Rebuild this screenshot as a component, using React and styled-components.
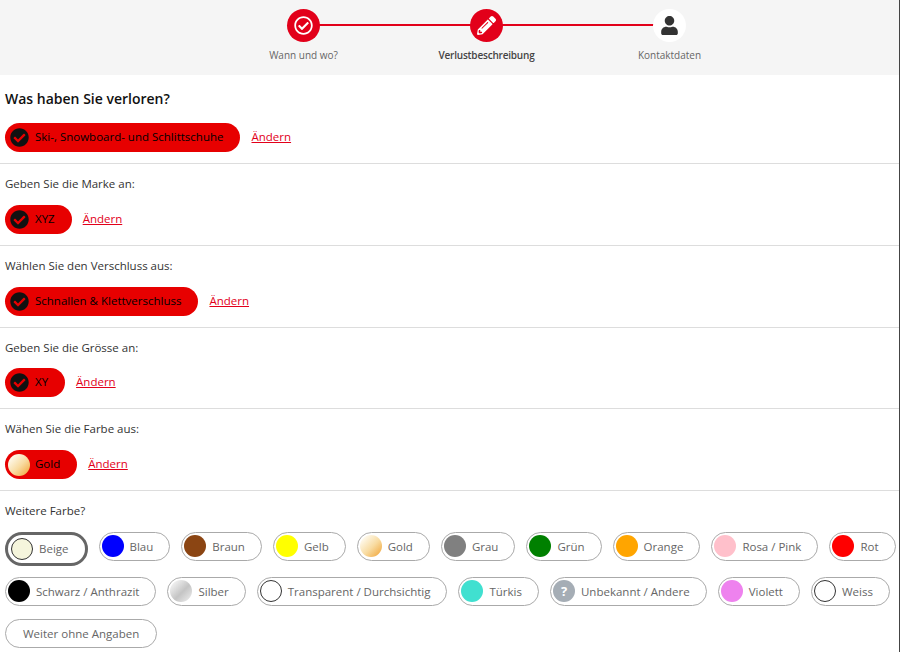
import styled, { createGlobalStyle } from 'styled-components';
import { FaCheckCircle, FaRegCheckCircle, FaPencilAlt, FaUser } from 'react-icons/fa';

const GlobalStyle = createGlobalStyle`
    html, body {
        margin: 0;
        padding: 0;
        background: #fff;
        font-family: "Open Sans", sans-serif;
        font-size: 11.5px;
        color: #333;
    }
`;

const Page = styled.main`
    position: relative;
    height: 652px;
    overflow: hidden;
    /* dark edge of the window on the right */
    &::after {
        content: '';
        position: absolute;
        top: 0;
        right: 0;
        bottom: 0;
        width: 1px;
        background: #444;
    }
`;

const Header = styled.header`
    height: 75px;
    background: #f5f5f5;
    display: flex;
    padding: 9px 0 0 212px;
    box-sizing: border-box;
`;

const Step = styled.div`
    position: relative;
    width: 183px;
    display: flex;
    flex-direction: column;
    align-items: center;
    /* connector to the next step */
    &:not(:last-child)::after {
        content: '';
        position: absolute;
        top: 15px;
        left: 50%;
        width: 100%;
        height: 2px;
        background: #e2001a;
    }
`;

const StepIcon = styled.div`
    position: relative;
    z-index: 1;
    width: 33px;
    height: 33px;
    border-radius: 50%;
    display: flex;
    align-items: center;
    justify-content: center;
    background: ${(p) => (p.$done ? '#e2001a' : '#fff')};
    color: ${(p) => (p.$done ? '#fff' : '#333')};
    font-size: 19px;
`;

const StepLabel = styled.div`
    margin-top: 6px;
    font-size: 10px;
    line-height: 14px;
    color: ${(p) => (p.$active ? '#444' : '#666')};
    font-weight: ${(p) => (p.$active ? 600 : 400)};
    letter-spacing: ${(p) => (p.$active ? '-0.2px' : '0')};
`;

const Title = styled.h2`
    margin: 0;
    padding: 14px 5px 0;
    font-size: 14px;
    line-height: 19px;
    font-weight: 600;
    color: #111;
`;

const Section = styled.section`
    padding: ${(p) => (p.$first ? '15px' : '12px')} 0 11px 5px;
    border-bottom: ${(p) => (p.$last ? 'none' : '1px solid #ddd')};
`;

const Question = styled.div`
    font-size: 11.5px;
    line-height: 15.75px;
    margin-bottom: 13px;
    color: #333;
`;

const Answer = styled.div`
    display: flex;
    align-items: center;
    gap: 11px;
`;

const SelectedPill = styled.div`
    height: 29px;
    box-sizing: border-box;
    padding: 0 17px 0 ${(p) => (p.$swatch ? '3px' : '5px')};
    display: inline-flex;
    align-items: center;
    gap: ${(p) => (p.$swatch ? '5px' : '6px')};
    border-radius: 15px;
    background: #e70000;
    font-size: 11.5px;
    color: #000;
    svg {
        font-size: 19px;
        color: #111;
    }
`;

const PillText = styled.span`
    margin-bottom: 2px;
`;

const ChangeLink = styled.a`
    margin-bottom: 2px;
    font-size: 11.5px;
    color: #e2001a;
    text-decoration: underline;
`;

const Chips = styled.div`
    display: flex;
    flex-wrap: wrap;
    gap: 11px;
    align-items: flex-start;
`;

const Chip = styled.button`
    height: ${(p) => (p.$focused ? '34px' : '29px')};
    box-sizing: border-box;
    padding: 0 16px 0 ${(p) => (p.$focused ? '3px' : '2px')};
    display: inline-flex;
    align-items: center;
    gap: 6px;
    border-radius: 18px;
    border: ${(p) => (p.$focused ? '3px solid #666' : '1px solid #aaa')};
    background: #fff;
    font-family: inherit;
    font-size: 11.5px;
    color: #666;
`;

const Swatch = styled.span`
    width: 22px;
    height: 22px;
    box-sizing: border-box;
    border-radius: 50%;
    background: ${(p) => p.$bg};
    border: ${(p) => (p.$outlined ? '1px solid #333' : 'none')};
    display: flex;
    align-items: center;
    justify-content: center;
    color: #fff;
    font-weight: 700;
    font-size: 13px;
`;

const SkipButton = styled(Chip)`
    padding: 0 17px;
    margin: 13px 0 0;
`;

const GOLD = 'linear-gradient(135deg, #fffdf5 10%, #f8dba0 55%, #f0a030 100%)';
const SILVER = 'linear-gradient(135deg, #f5f5f5 10%, #c4c4c4 55%, #f0f0f0 100%)';

const colours = [
    { name: 'Beige', bg: '#f5f5dc', outlined: true, focused: true },
    { name: 'Blau', bg: '#0000ff' },
    { name: 'Braun', bg: '#8b4513' },
    { name: 'Gelb', bg: '#ffff00' },
    { name: 'Gold', bg: GOLD },
    { name: 'Grau', bg: '#808080' },
    { name: 'Grün', bg: '#008000' },
    { name: 'Orange', bg: '#ffa500' },
    { name: 'Rosa / Pink', bg: '#ffc0cb' },
    { name: 'Rot', bg: '#ff0000' },
    { name: 'Schwarz / Anthrazit', bg: '#000' },
    { name: 'Silber', bg: SILVER },
    { name: 'Transparent / Durchsichtig', bg: '#fff', outlined: true },
    { name: 'Türkis', bg: '#40e0d0' },
    { name: 'Unbekannt / Andere', bg: '#a5adb5', mark: '?' },
    { name: 'Violett', bg: '#ee82ee' },
    { name: 'Weiss', bg: '#fff', outlined: true },
];

const answers = [
    { question: 'Geben Sie die Marke an:', answer: 'XYZ' },
    { question: 'Wählen Sie den Verschluss aus:', answer: 'Schnallen & Klettverschluss' },
    { question: 'Geben Sie die Grösse an:', answer: 'XY' },
];

export default function App() {
    return (
        <Page>
            <GlobalStyle />
            <Header>
                <Step>
                    <StepIcon $done><FaRegCheckCircle /></StepIcon>
                    <StepLabel>Wann und wo?</StepLabel>
                </Step>
                <Step>
                    <StepIcon $done><FaPencilAlt /></StepIcon>
                    <StepLabel $active>Verlustbeschreibung</StepLabel>
                </Step>
                <Step>
                    <StepIcon><FaUser /></StepIcon>
                    <StepLabel>Kontaktdaten</StepLabel>
                </Step>
            </Header>
            <Title>Was haben Sie verloren?</Title>
            <Section $first>
                <Answer>
                    <SelectedPill><FaCheckCircle /><PillText>Ski-, Snowboard- und Schlittschuhe</PillText></SelectedPill>
                    <ChangeLink>Ändern</ChangeLink>
                </Answer>
            </Section>
            {answers.map((item) => (
                <Section key={item.question}>
                    <Question>{item.question}</Question>
                    <Answer>
                        <SelectedPill><FaCheckCircle /><PillText>{item.answer}</PillText></SelectedPill>
                        <ChangeLink>Ändern</ChangeLink>
                    </Answer>
                </Section>
            ))}
            <Section>
                <Question>Wähen Sie die Farbe aus:</Question>
                <Answer>
                    <SelectedPill $swatch><Swatch $bg={GOLD} /><PillText>Gold</PillText></SelectedPill>
                    <ChangeLink>Ändern</ChangeLink>
                </Answer>
            </Section>
            <Section $last>
                <Question>Weitere Farbe?</Question>
                <Chips>
                    {colours.map((c) => (
                        <Chip key={c.name} $focused={c.focused}>
                            <Swatch $bg={c.bg} $outlined={c.outlined}>{c.mark}</Swatch>
                            {c.name}
                        </Chip>
                    ))}
                </Chips>
                <SkipButton>Weiter ohne Angaben</SkipButton>
            </Section>
        </Page>
    );
}
